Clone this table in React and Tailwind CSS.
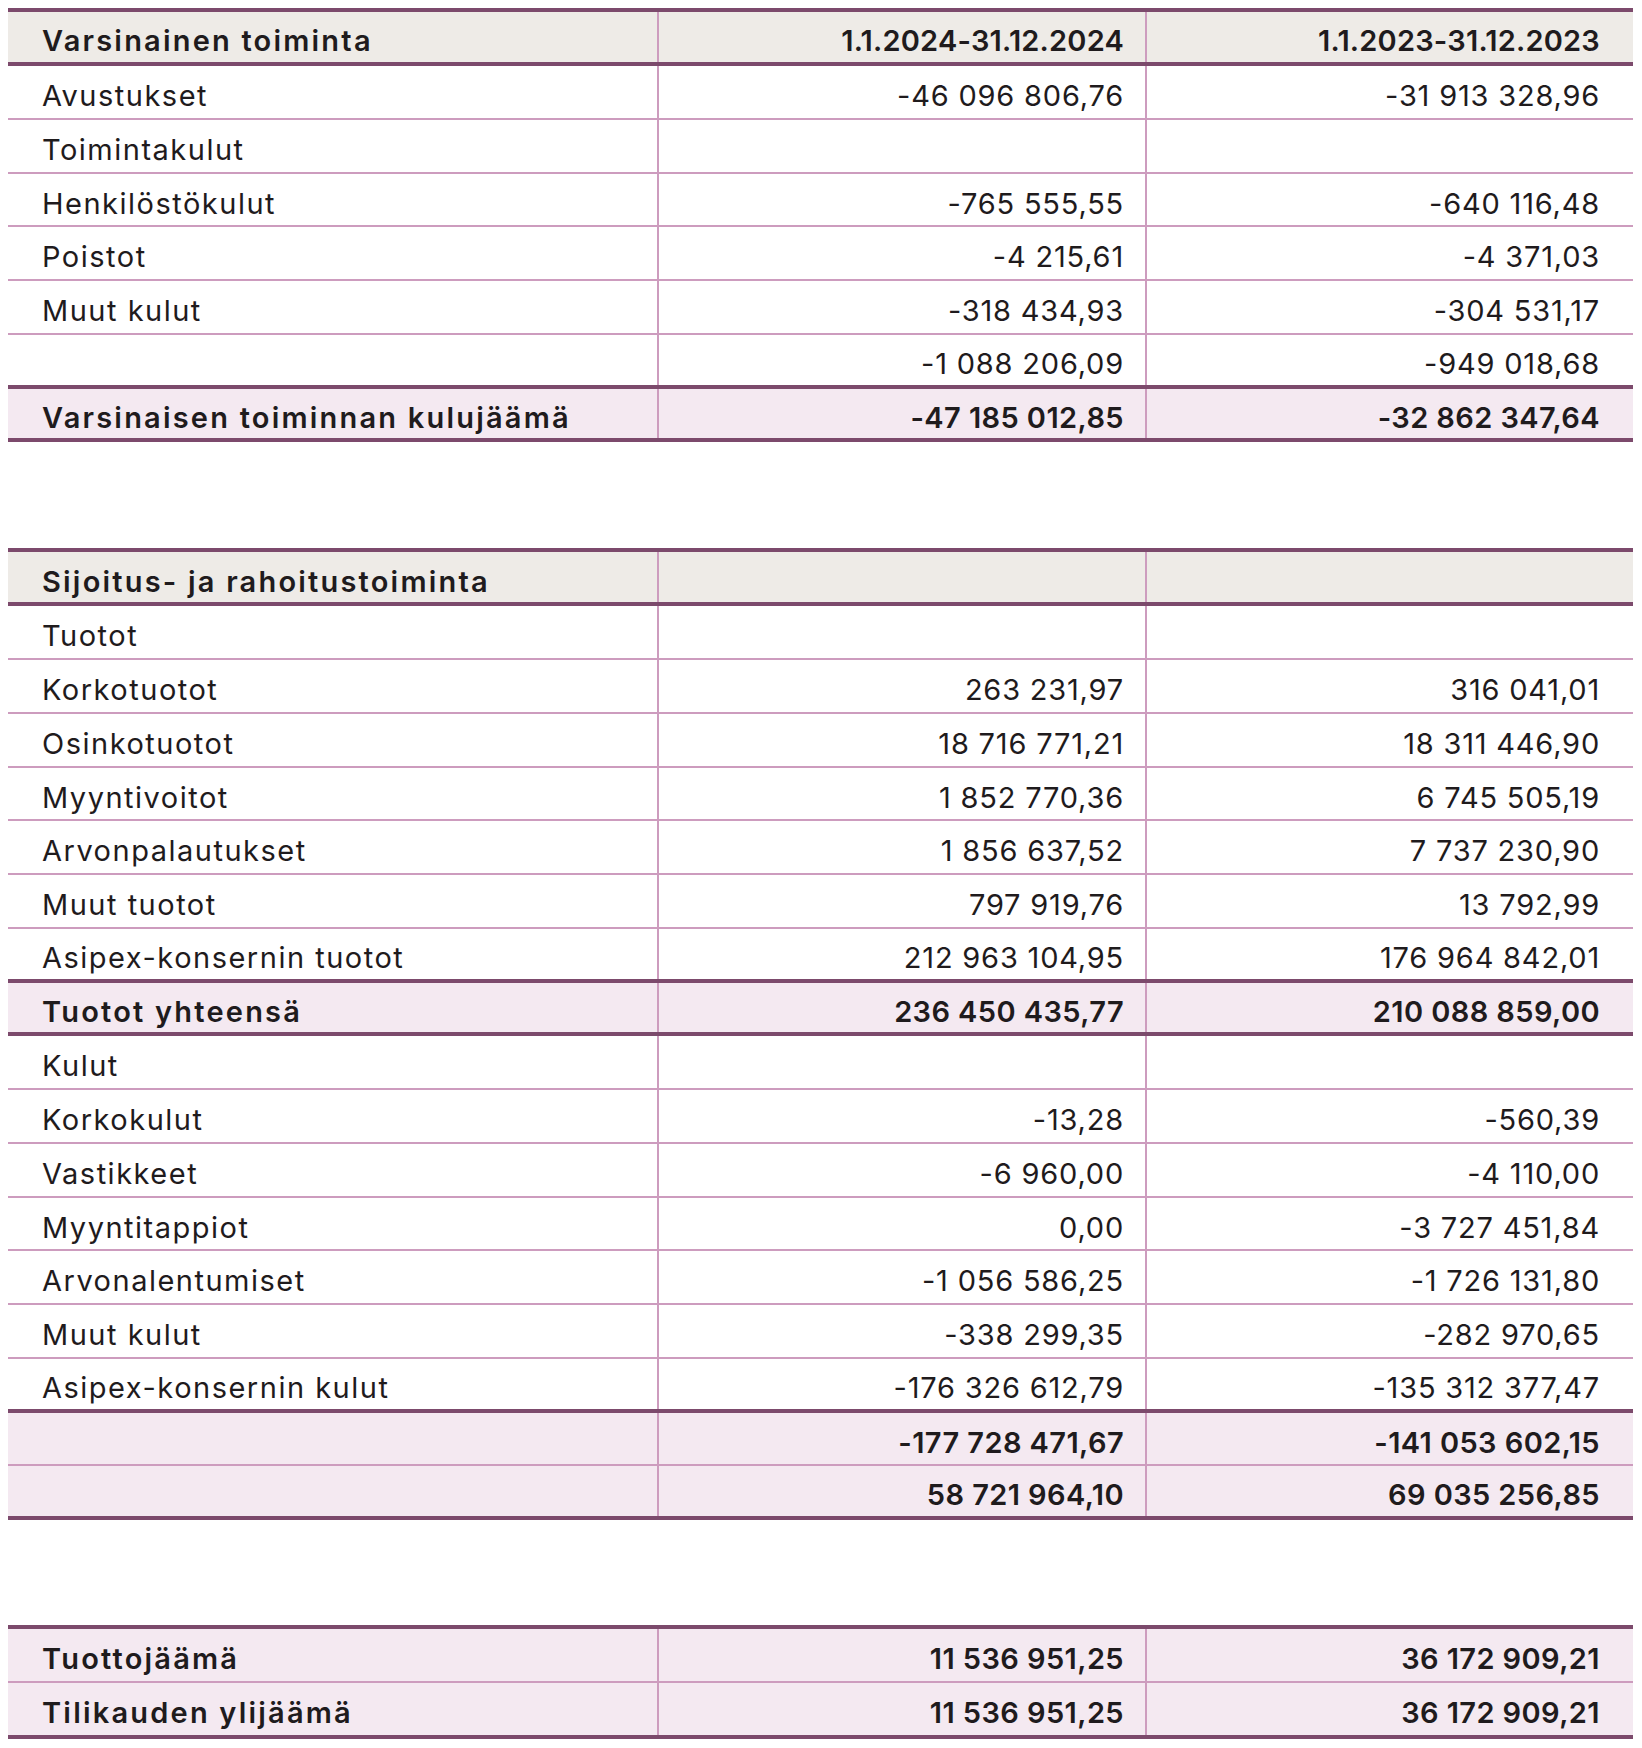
import React from 'react';

const sectionOne = [
  { label: 'Avustukset', a: '-46 096 806,76', b: '-31 913 328,96' },
  { label: 'Toimintakulut' },
  { label: 'Henkilöstökulut', a: '-765 555,55', b: '-640 116,48' },
  { label: 'Poistot', a: '-4 215,61', b: '-4 371,03' },
  { label: 'Muut kulut', a: '-318 434,93', b: '-304 531,17' },
  { label: '', a: '-1 088 206,09', b: '-949 018,68', thick: true },
  { label: 'Varsinaisen toiminnan kulujäämä', a: '-47 185 012,85', b: '-32 862 347,64', total: true, thick: true },
];

const sectionTwo = [
  { label: 'Tuotot' },
  { label: 'Korkotuotot', a: '263 231,97', b: '316 041,01' },
  { label: 'Osinkotuotot', a: '18 716 771,21', b: '18 311 446,90' },
  { label: 'Myyntivoitot', a: '1 852 770,36', b: '6 745 505,19' },
  { label: 'Arvonpalautukset', a: '1 856 637,52', b: '7 737 230,90' },
  { label: 'Muut tuotot', a: '797 919,76', b: '13 792,99' },
  { label: 'Asipex-konsernin tuotot', a: '212 963 104,95', b: '176 964 842,01', thick: true },
  { label: 'Tuotot yhteensä', a: '236 450 435,77', b: '210 088 859,00', total: true, thick: true },
  { label: 'Kulut' },
  { label: 'Korkokulut', a: '-13,28', b: '-560,39' },
  { label: 'Vastikkeet', a: '-6 960,00', b: '-4 110,00' },
  { label: 'Myyntitappiot', a: '0,00', b: '-3 727 451,84' },
  { label: 'Arvonalentumiset', a: '-1 056 586,25', b: '-1 726 131,80' },
  { label: 'Muut kulut', a: '-338 299,35', b: '-282 970,65' },
  { label: 'Asipex-konsernin kulut', a: '-176 326 612,79', b: '-135 312 377,47', thick: true },
  { label: '', a: '-177 728 471,67', b: '-141 053 602,15', total: true },
  { label: '', a: '58 721 964,10', b: '69 035 256,85', total: true, thick: true },
];

const HeaderRow = ({ label, a, b }) => (
  <div className="flex h-[58px] border-y-4 border-[#7c4a6c] bg-[#eeebe7] font-semibold">
    <div className="flex w-[649px] items-center pl-[34px] pt-2 tracking-[2.2px]">{label}</div>
    <div className="flex w-[488px] items-center justify-end border-l-2 border-[#cd9cbe] pr-[21px] pt-2 tracking-[0.2px]">{a}</div>
    <div className="flex flex-1 items-center justify-end border-l-2 border-[#cd9cbe] pr-[33px] pt-2 tracking-[0.2px]">{b}</div>
  </div>
);

const Row = ({ label, a, b, total, thick, className = '' }) => (
  <div
    className={`flex h-[53.75px] ${thick ? 'border-b-4 border-[#7c4a6c]' : 'border-b-2 border-[#cd9cbe]'} ${
      total ? 'bg-[#f4e9f1] font-semibold' : 'bg-white font-normal'
    } ${className}`}
  >
    <div className={`flex w-[649px] items-center pl-[34px] pt-2 ${total ? 'tracking-[2.2px]' : 'tracking-[1.5px]'}`}>
      {label}
    </div>
    <div
      className={`flex w-[488px] items-center justify-end border-l-2 border-[#cd9cbe] pr-[21px] pt-2 whitespace-nowrap ${
        total ? 'tracking-[0.4px]' : 'tracking-[0.8px]'
      }`}
    >
      {a}
    </div>
    <div
      className={`flex flex-1 items-center justify-end border-l-2 border-[#cd9cbe] pr-[33px] pt-2 whitespace-nowrap ${
        total ? 'tracking-[0.4px]' : 'tracking-[0.8px]'
      }`}
    >
      {b}
    </div>
  </div>
);

export default function App() {
  return (
    <div className="min-h-[1748px] w-[1642px] bg-white pt-2 pl-2 pr-[9px] font-['Inter',sans-serif] text-[29px] text-[#1f1b1d]">
      <div className="flex flex-col">
        <HeaderRow label="Varsinainen toiminta" a="1.1.2024-31.12.2024" b="1.1.2023-31.12.2023" />
        {sectionOne.map((r, i) => (
          <Row key={i} {...r} />
        ))}
      </div>

      <div className="mt-[106px] flex flex-col">
        <HeaderRow label="Sijoitus- ja rahoitustoiminta" a="" b="" />
        {sectionTwo.map((r, i) => (
          <Row key={i} {...r} />
        ))}
      </div>

      <div className="mt-[105px] flex flex-col border-t-4 border-[#7c4a6c]">
        <Row label="Tuottojäämä" a="11 536 951,25" b="36 172 909,21" total className="!h-[53.5px]" />
        <Row label="Tilikauden ylijäämä" a="11 536 951,25" b="36 172 909,21" total thick className="!h-[56px]" />
      </div>
    </div>
  );
}
